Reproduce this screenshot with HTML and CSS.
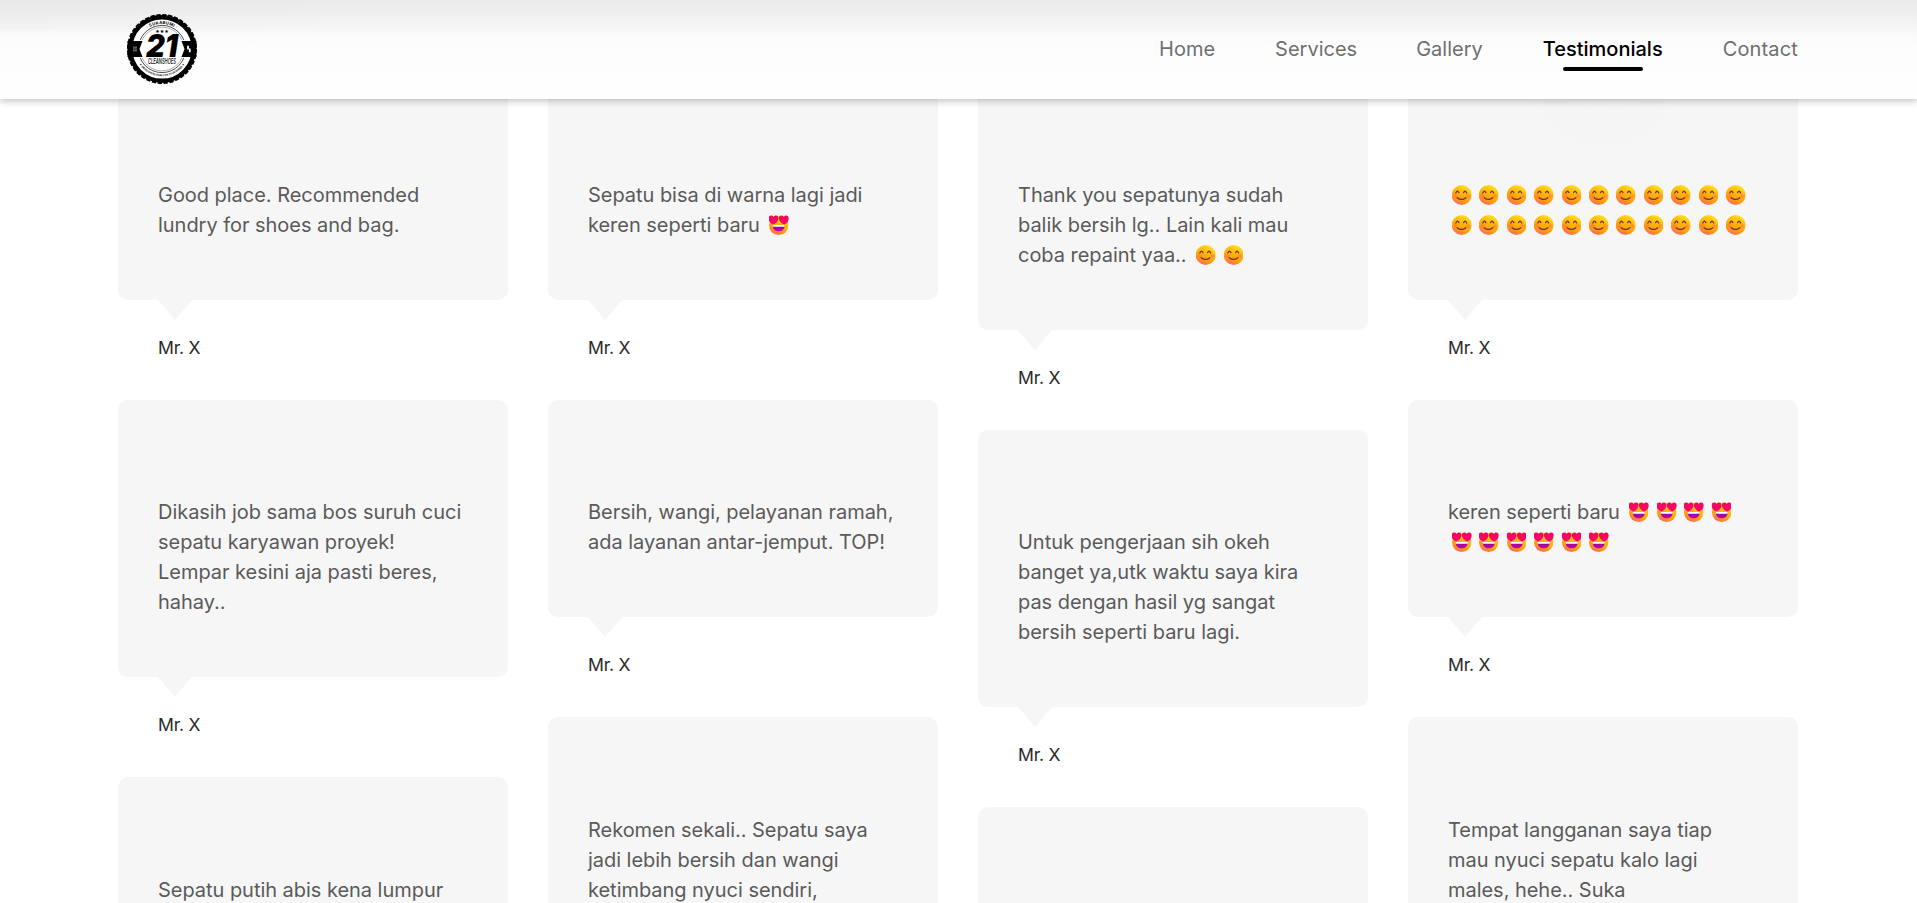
FILE: index.html
```html
<!DOCTYPE html>
<html lang="id">
<head>
<meta charset="utf-8">
<title>21 Cleanshoes – Testimonials</title>
<link rel="stylesheet" href="styles.css">
</head>
<body>
<svg class="defs" aria-hidden="true">
  <defs>
    <linearGradient id="face" x1="0.75" y1="0" x2="0.3" y2="1">
      <stop offset="0" stop-color="#ffe82a"/><stop offset="0.3" stop-color="#ffc20a"/><stop offset="0.75" stop-color="#ff980c"/><stop offset="1" stop-color="#ff5f70"/>
    </linearGradient>
    <radialGradient id="cheek"><stop offset="0" stop-color="#ff6a4a" stop-opacity="0.7"/><stop offset="1" stop-color="#ff7a3a" stop-opacity="0"/></radialGradient>
    <linearGradient id="heart" x1="0" y1="0" x2="0.4" y2="1"><stop offset="0" stop-color="#e8104a"/><stop offset="1" stop-color="#ff0078"/></linearGradient>
    <linearGradient id="mouth" x1="0" y1="0" x2="0" y2="1"><stop offset="0" stop-color="#8c0c98"/><stop offset="1" stop-color="#c500ac"/></linearGradient>
    <symbol id="smile" viewBox="0 0 20 20">
      <circle cx="10" cy="10" r="10" fill="url(#face)"/>
      <circle cx="3.6" cy="11" r="3.2" fill="url(#cheek)"/><circle cx="16.4" cy="11" r="3.2" fill="url(#cheek)"/>
      <path d="M4.1 8q1.5-3.5 3.1-.4M11.9 7.6q1.6-3.1 3.1.4M5.5 12.7q4.4 3.4 8.6 0" fill="none" stroke="#6b3340" stroke-width="1.25" stroke-linecap="round"/>
    </symbol>
    <symbol id="love" viewBox="0 0 20 20">
      <circle cx="10" cy="10.3" r="9.7" fill="url(#face)"/>
      <path d="M4 10.4H16C16 14.1 13.4 16.3 10 16.3S4 14.1 4 10.4Z" fill="url(#mouth)"/>
      <path d="M4 10.1H16V11.7H4Z" fill="#fff"/>
      <path d="M4.4 9.6C1.6 8.2 -.2 6 -.2 3.4 -.2 .3 3.3-.6 4.9 1.8 6.6-.6 9.8.2 9.8 3.1 9.8 6 7.2 8.6 4.4 9.6Z" fill="url(#heart)"/>
      <path d="M15.6 9.6C18.4 8.2 20.2 6 20.2 3.4 20.2 .3 16.7-.6 15.1 1.8 13.4-.6 10.2.2 10.2 3.1 10.2 6 12.8 8.6 15.6 9.6Z" fill="url(#heart)"/>
    </symbol>
  </defs>
</svg>

<header class="header">
  <div class="container header-inner">
    <a class="brand">
      <svg class="logo" viewBox="-36 -36 72 72" role="img" aria-label="21 Cleanshoes">
        <circle r="31.8" fill="#fff" stroke="#000" stroke-width="4.4"/>
        <circle r="33.8" fill="none" stroke="#000" stroke-width="2.4" stroke-dasharray="4.2 1.7"/>
        <circle r="23.6" fill="none" stroke="#222" stroke-width="0.8"/>
        <circle r="21.8" fill="none" stroke="#777" stroke-width="0.6"/>
        <path id="arc-top" d="M-25 0A25 25 0 0 1 25 0" fill="none"/>
        <path id="arc-bottom" d="M-27.2 0A27.2 27.2 0 0 0 27.2 0" fill="none"/>
        <text class="logo-city"><textPath href="#arc-top" startOffset="50%">· SUKABUMI ·</textPath></text>
        <text class="logo-tag"><textPath href="#arc-bottom" startOffset="50%">★ GOOD SHOES CARE FOR YOUR SHOES ★</textPath></text>
        <path d="M-26 -9H-15V9H-26Z M26 -9H15V9H26Z" fill="#fff"/>
        <path d="M-34.5-8H-19.5L-22.5 0-19.5 8H-34.5Z M34.5-8H19.5L22.5 0 19.5 8H34.5Z"/>
        <path d="M-29-1.8H-25M-29 0H-25M-29 1.8H-25" stroke="#aaa" stroke-width="0.8"/>
        <path d="M26 -2.5v2.2M27.8 0.2v2.2" stroke="#fff" stroke-width="1.8" stroke-linecap="round"/>
        <text class="logo-stars" x="0" y="-16">★★★</text>
        <text class="logo-number" x="0" y="7.8" textLength="32" lengthAdjust="spacingAndGlyphs">21</text>
        <text class="logo-name" x="0" y="15" textLength="28" lengthAdjust="spacingAndGlyphs">CLEANSHOES</text>
      </svg>
    </a>
    <nav class="nav">
      <a>Home</a><a class="services">Services</a><a>Gallery</a><a class="active">Testimonials</a><a class="contact">Contact</a>
    </nav>
  </div>
</header>

<main class="viewport">
<div class="container columns">
  <div class="column">
    <article><p class="quote">Good place. Recommended<br>lundry for shoes and bag.</p><p class="author">Mr. X</p></article>
    <article><p class="quote">Dikasih job sama bos suruh cuci<br>sepatu karyawan proyek!<br>Lempar kesini aja pasti beres,<br>hahay..</p><p class="author">Mr. X</p></article>
    <article><p class="quote">Sepatu putih abis kena lumpur</p></article>
  </div>
  <div class="column">
    <article><p class="quote">Sepatu bisa di warna lagi jadi<br>keren seperti baru <svg class="emoji"><use href="#love"/></svg></p><p class="author">Mr. X</p></article>
    <article><p class="quote">Bersih, wangi, pelayanan ramah,<br>ada layanan antar-jemput. TOP!</p><p class="author">Mr. X</p></article>
    <article><p class="quote">Rekomen sekali.. Sepatu saya<br>jadi lebih bersih dan wangi<br>ketimbang nyuci sendiri,</p></article>
  </div>
  <div class="column">
    <article><p class="quote">Thank you sepatunya sudah<br>balik bersih lg.. Lain kali mau<br>coba repaint yaa.. <svg class="emoji"><use href="#smile"/></svg><svg class="emoji"><use href="#smile"/></svg></p><p class="author">Mr. X</p></article>
    <article><p class="quote">Untuk pengerjaan sih okeh<br>banget ya,utk waktu saya kira<br>pas dengan hasil yg sangat<br>bersih seperti baru lagi.</p><p class="author">Mr. X</p></article>
    <article><p class="quote"></p></article>
  </div>
  <div class="column">
    <article><p class="quote glow"><svg class="emoji"><use href="#smile"/></svg><svg class="emoji"><use href="#smile"/></svg><svg class="emoji"><use href="#smile"/></svg><svg class="emoji"><use href="#smile"/></svg><svg class="emoji"><use href="#smile"/></svg><svg class="emoji"><use href="#smile"/></svg><svg class="emoji"><use href="#smile"/></svg><svg class="emoji"><use href="#smile"/></svg><svg class="emoji"><use href="#smile"/></svg><svg class="emoji"><use href="#smile"/></svg><svg class="emoji"><use href="#smile"/></svg><br><svg class="emoji"><use href="#smile"/></svg><svg class="emoji"><use href="#smile"/></svg><svg class="emoji"><use href="#smile"/></svg><svg class="emoji"><use href="#smile"/></svg><svg class="emoji"><use href="#smile"/></svg><svg class="emoji"><use href="#smile"/></svg><svg class="emoji"><use href="#smile"/></svg><svg class="emoji"><use href="#smile"/></svg><svg class="emoji"><use href="#smile"/></svg><svg class="emoji"><use href="#smile"/></svg><svg class="emoji"><use href="#smile"/></svg></p><p class="author">Mr. X</p></article>
    <article><p class="quote">keren seperti baru <svg class="emoji"><use href="#love"/></svg><svg class="emoji"><use href="#love"/></svg><svg class="emoji"><use href="#love"/></svg><svg class="emoji"><use href="#love"/></svg><br><svg class="emoji"><use href="#love"/></svg><svg class="emoji"><use href="#love"/></svg><svg class="emoji"><use href="#love"/></svg><svg class="emoji"><use href="#love"/></svg><svg class="emoji"><use href="#love"/></svg><svg class="emoji"><use href="#love"/></svg></p><p class="author">Mr. X</p></article>
    <article><p class="quote">Tempat langganan saya tiap<br>mau nyuci sepatu kalo lagi<br>males, hehe.. Suka</p></article>
  </div>
</div>
</main>
</body>
</html>
```
FILE: styles.css
```css
* { box-sizing: border-box; }
body {
  margin: 0;
  height: 903px;
  overflow: hidden;
  background: #fff;
  font-family: Inter, sans-serif;
  font-size: 20px;
  line-height: 30px;
}
.defs { position: absolute; width: 0; height: 0; }
.container { width: 1680px; margin-left: 118px; }

.header {
  position: relative;
  z-index: 2;
  height: 99px;
  background:
    linear-gradient(to right, rgba(0,0,0,0.012), transparent 20%) 0 0 / 100% 30px no-repeat,
    linear-gradient(#ebebec 0, #eeeeef 12px, #f5f5f5 25px, #fbfbfb 37px, #fdfdfd 50px, #fefefe 100%);
  box-shadow: 0 2px 7px rgba(0, 0, 0, 0.25);
}
.header-inner {
  display: flex;
  justify-content: space-between;
  align-items: center;
  height: 98px;
}
.brand { display: block; margin-left: 8px; height: 72px; }
.logo { display: block; width: 72px; height: 72px; }
.logo text { text-anchor: middle; font-family: Inter, sans-serif; font-weight: 700; }
.logo .logo-city { font-size: 4.2px; letter-spacing: 0.3px; }
.logo .logo-tag { font-size: 2.5px; }
.logo .logo-stars { font-family: "DejaVu Sans", sans-serif; font-size: 5px; }
.logo .logo-number { font-size: 31px; font-weight: 900; font-style: italic; }
.logo .logo-name { font-size: 7.4px; font-style: italic; font-weight: 500; }

.nav { display: flex; gap: 60px; color: #6f6f6f; }
.nav .services { margin-right: -1px; }
.nav .contact { letter-spacing: 0.15px; }
.nav .active { position: relative; color: #000; font-weight: 500; }
.nav .active::after {
  content: "";
  position: absolute;
  left: 50%;
  bottom: -7px;
  width: 80px;
  height: 4px;
  margin-left: -40px;
  border-radius: 2px;
  background: #000;
}

.viewport { height: 804px; overflow: hidden; }
.columns {
  display: grid;
  grid-template-columns: repeat(4, 390px);
  gap: 40px;
  align-items: start;
  margin-top: -16px;
}
.quote {
  position: relative;
  margin: 0;
  padding: 97px 0 60px 40px;
  min-height: 217px;
  border-radius: 10px;
  background: #f6f6f6;
  color: #5a5a5a;
  letter-spacing: -0.035px;
  white-space: nowrap;
}
article:nth-child(3) .quote { padding-top: 98px; }
.quote::after {
  content: "";
  position: absolute;
  left: 40px;
  top: 100%;
  border: solid transparent;
  border-width: 20px 17px 0;
  border-top-color: #f6f6f6;
}
.glow { background: radial-gradient(circle at 195px -10px, #f4f4f4 0, #f5f5f5 60px, #f6f6f6 85px); }
.author {
  margin: 0;
  padding: 33px 0 37px 40px;
  font-size: 17.6px;
  letter-spacing: -0.25px;
  color: #2a2a2a;
}
.emoji {
  width: 27.4px;
  height: 20px;
  padding: 0 3.7px;
  vertical-align: -3px;
}
```
